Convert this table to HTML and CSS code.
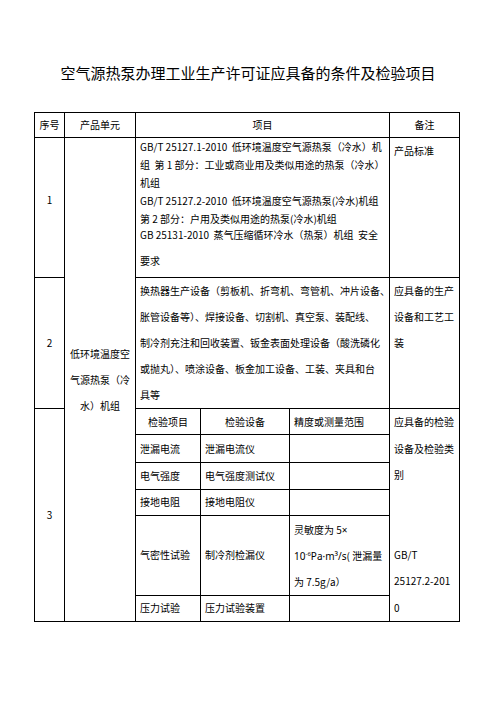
FILE: index.html
```html
<!DOCTYPE html>
<html lang="zh-CN">
<head>
<meta charset="utf-8">
<title>空气源热泵办理工业生产许可证应具备的条件及检验项目</title>
<link rel="stylesheet" href="styles.css">
</head>
<body>
<div class="page">
  <h1 class="title">空气源热泵办理工业生产许可证应具备的条件及检验项目</h1>
  <table class="spec">
    <colgroup>
      <col class="c-no">
      <col class="c-unit">
      <col class="c-a">
      <col class="c-b">
      <col class="c-c">
      <col class="c-note">
    </colgroup>
    <tr class="r-head">
      <td class="center">序号</td>
      <td class="center">产品单元</td>
      <td class="center" colspan="3">项目</td>
      <td class="center">备注</td>
    </tr>
    <tr class="r-1">
      <td class="center no1">1</td>
      <td class="center unit" rowspan="8"><div class="lines26">低环境温度空<br>气源热泵（冷<br>水）机组</div></td>
      <td class="top" colspan="3">
        <div class="lines18">
          <div class="ln">GB/T 25127.1-2010&nbsp; 低环境温度空气源热泵（冷水）机</div>
          <div class="ln">组&nbsp; 第 1 部分：工业或商业用及类似用途的热泵（冷水）</div>
          <div class="ln">机组</div>
          <div class="ln">GB/T 25127.2-2010&nbsp; 低环境温度空气源热泵(冷水)机组</div>
          <div class="ln">第 2 部分：户用及类似用途的热泵(冷水)机组</div>
        </div>
        <div class="lines26 p3">
          <div class="ln">GB 25131-2010&nbsp; 蒸气压缩循环冷水（热泵）机组&nbsp; 安全</div>
          <div class="ln">要求</div>
        </div>
      </td>
      <td class="top note1">产品标准</td>
    </tr>
    <tr class="r-2">
      <td class="center">2</td>
      <td class="top" colspan="3">
        <div class="lines26">
          <div class="ln">换热器生产设备（剪板机、折弯机、弯管机、冲片设备、</div>
          <div class="ln">胀管设备等）、焊接设备、切割机、真空泵、装配线、</div>
          <div class="ln">制冷剂充注和回收装置、钣金表面处理设备（酸洗磷化</div>
          <div class="ln">或抛丸）、喷涂设备、板金加工设备、工装、夹具和台</div>
          <div class="ln">具等</div>
        </div>
      </td>
      <td class="top"><div class="lines26">应具备的生产<br>设备和工艺工<br>装</div></td>
    </tr>
    <tr class="s-head">
      <td class="center" rowspan="6">3</td>
      <td class="center">检验项目</td>
      <td class="center">检验设备</td>
      <td class="left">精度或测量范围</td>
      <td class="top note3" rowspan="6"><div class="lines26b">应具备的检验<br>设备及检验类<br>别<br><br><br>GB/T<br>25127.2-201<br>0</div></td>
    </tr>
    <tr class="s-1">
      <td class="left">泄漏电流</td>
      <td class="left">泄漏电流仪</td>
      <td class="left"></td>
    </tr>
    <tr class="s-2">
      <td class="left">电气强度</td>
      <td class="left">电气强度测试仪</td>
      <td class="left"></td>
    </tr>
    <tr class="s-3">
      <td class="left">接地电阻</td>
      <td class="left">接地电阻仪</td>
      <td class="left"></td>
    </tr>
    <tr class="s-4">
      <td class="left">气密性试验</td>
      <td class="left">制冷剂检漏仪</td>
      <td class="left"><div class="lines25">灵敏度为 5<span class="latin">×</span><br><span class="latin">10<sup>-6</sup>Pa·m³/s</span>( 泄漏量<br>为 7.5g/a）</div></td>
    </tr>
    <tr class="s-5">
      <td class="left">压力试验</td>
      <td class="left">压力试验装置</td>
      <td class="left"></td>
    </tr>
  </table>
</div>
</body>
</html>
```

FILE: styles.css
```css
html, body {
  margin: 0;
  padding: 0;
  background: #ffffff;
}

.page {
  width: 496px;
  padding-top: 61px;
  font-family: "Noto Sans CJK SC", "Noto Sans", sans-serif;
  color: #000;
}

.title {
  margin: 0 0 27px 0;
  font-size: 15px;
  line-height: 24px;
  font-weight: normal;
  text-align: center;
}

.spec {
  border-collapse: collapse;
  table-layout: fixed;
  width: 426px;
  margin-left: 34px;
  font-size: 10px;
}

.c-no { width: 30px; }
.c-unit { width: 71px; }
.c-a { width: 65px; }
.c-b { width: 89px; }
.c-c { width: 100px; }
.c-note { width: 70px; }

.spec td {
  border: 1px solid #000;
  padding: 0 4px;
  line-height: 18px;
  white-space: nowrap;
  overflow: hidden;
}

.spec td.center {
  text-align: center;
  vertical-align: middle;
}

.spec td.left {
  text-align: left;
  vertical-align: middle;
}

.spec td.top {
  text-align: left;
  vertical-align: top;
}

.r-head { height: 25px; }
.r-1 { height: 140px; }
.r-2 { height: 130px; }
.s-head { height: 26px; }
.s-1 { height: 28px; }
.s-2 { height: 26px; }
.s-3 { height: 26px; }
.s-4 { height: 79px; }
.s-5 { height: 26px; }

.no1 { padding-bottom: 16px !important; }

.lines18 { line-height: 18px; }
.lines26 { line-height: 26px; }
.lines26b { line-height: 26.5px; }
.lines25 { line-height: 25px; }

.p3 { margin-top: -6px; }

.note1 { padding-top: 4px !important; }

.latin {
  font-family: "Noto Sans", "Open Sans", sans-serif;
}

sup {
  font-size: 6px;
  line-height: 0;
  vertical-align: 4px;
}
```
